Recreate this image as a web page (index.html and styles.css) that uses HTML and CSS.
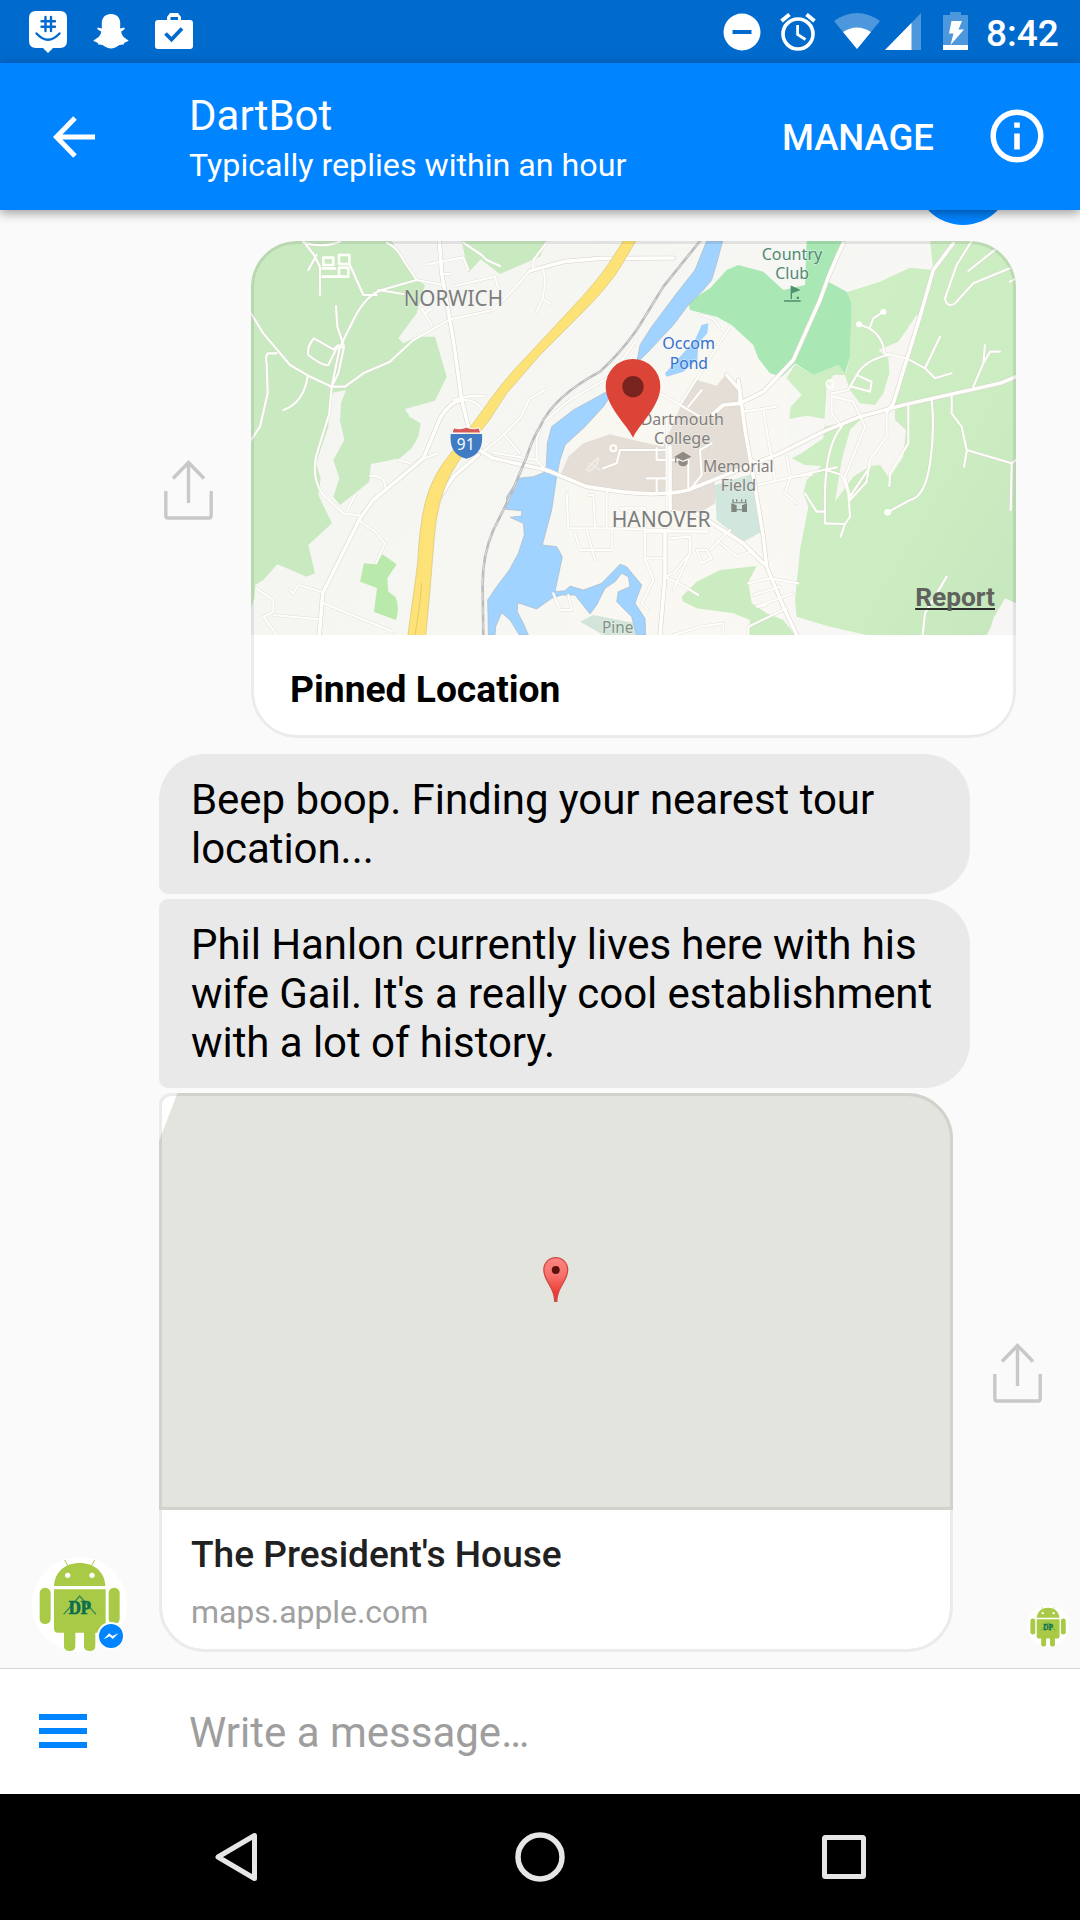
FILE: index.html
```html
<!DOCTYPE html>
<html lang="en">
<head>
<meta charset="utf-8">
<title>DartBot</title>
<link rel="stylesheet" href="styles.css">
</head>
<body>
<svg class="defs" width="0" height="0">
  <defs>
    <symbol id="share" viewBox="0 0 49 60">
      <path d="M1.8 31V55.5Q1.8 58 4.3 58H44.700Q47.200 58 47.200 55.500V31M24.500 43V2.500M9 18.500L24.500 2.500L40 18.500" fill="none" stroke="#c8c8c8" stroke-width="3.400"/>
    </symbol>
    <symbol id="droid" viewBox="97 231 285 285">
      <circle cx="239.500" cy="373.500" r="142.500" fill="#fff"/>
      <g fill="#a9ca46">
        <path d="M163 318C165 275 197 249 240 249S315 275 317 318Z"/>
        <path d="M163 328H318V446Q318 458 306 458H175Q163 458 163 446Z"/>
        <rect x="120" y="323" width="33" height="109" rx="16"/>
        <rect x="327" y="323" width="33" height="109" rx="16"/>
        <path d="M193 450H227V500Q225 513 210 513Q195 513 193 500ZM253 450H287V500Q285 513 270 513Q255 513 253 500Z"/>
        <path d="M195 240L206 260M285 240L274 260" stroke="#a9ca46" stroke-width="3"/>
      </g>
      <circle cx="204" cy="286" r="8" fill="#fff"/>
      <circle cx="277" cy="286" r="8" fill="#fff"/>
      <path d="M192 403L240 348L289 403" fill="none" stroke="#2f8a55" stroke-width="4"/>
      <text class="dp" x="207" y="402" textLength="67" lengthAdjust="spacingAndGlyphs">DP</text>
    </symbol>
  </defs>
</svg>

<div class="phone">
  <div class="status">
    <svg class="s-groupme" viewBox="0 0 38 42"><path d="M7 0H31Q38 0 38 7V30Q38 37 31 37H24L19 42L14 37H7Q0 37 0 30V7Q0 0 7 0Z" fill="#fff"/><path d="M16.500 6V20M22 6V20M12.500 10.300H26M12.500 15.700H26M7.500 22.500Q19 35 30.500 22.500" fill="none" stroke="#006acd" stroke-width="2.400" stroke-linecap="round"/></svg>
    <svg class="s-snap" viewBox="0 0 36 36"><path d="M18 0C24 0 27.500 4 27.500 9.500L27.400 15L31.500 14C33 15 32 16.500 28.500 18C29 23 33 25.500 36 27C35.500 29 31 28.500 31 31.500C25 31 24 35.500 18 35.500S11 31 5 31.500C5 28.500 .5 29 0 27C3 25.500 7.500 23 8 18C4 16.500 3 15 4.500 14L8.600 15L8.500 9.500C8.500 4 12 0 18 0Z" fill="#fff"/></svg>
    <svg class="s-case" viewBox="0 0 38 36"><path d="M12 7V4L15 0H23L26 4V7H35Q38 7 38 10V33Q38 36 35 36H3Q0 36 0 33V10Q0 7 3 7ZM15.500 7H23V4H15.500Z" fill="#fff" fill-rule="evenodd"/><path d="M10.500 20.500L16.500 26.500L27 15.500" fill="none" stroke="#006acd" stroke-width="3.800"/></svg>
    <svg class="s-dnd" viewBox="0 0 38 38"><circle cx="19" cy="19" r="18.500" fill="#fff"/><path d="M9.500 19H28.500" stroke="#006acd" stroke-width="4"/></svg>
    <svg class="s-alarm" viewBox="0 0 36 38"><g fill="none" stroke="#fff"><circle cx="18" cy="21" r="15" stroke-width="3.600"/><path d="M1.500 8L9.500 1.500M34.500 8L26.500 1.500" stroke-width="4"/><path d="M17.600 12V21.500L25.500 26.500" stroke-width="2.800"/></g></svg>
    <svg class="s-wifi" viewBox="0 0 46 36"><path d="M0 8Q23 -8 46 8L23 36Z" fill="#4d97dc"/><path d="M9 19Q23 10 37 19L23 36Z" fill="#fff"/></svg>
    <svg class="s-cell" viewBox="0 0 36 37"><path d="M36 0V37H0Z" fill="#4d97dc"/><path d="M26.500 10V37H0Z" fill="#fff"/></svg>
    <svg class="s-batt" viewBox="0 0 25 38"><path d="M7 0H18V3H25V33H0V3H7Z" fill="#4d97dc"/><path d="M0 33H25V38H0ZM8.500 9H19L15.500 17.500H21L7.500 33L10.500 21.500H6Z" fill="#fff"/></svg>
    <span class="clock">8:42</span>
  </div>

  <header class="bar">
    <svg class="back" viewBox="0 0 42 42"><path d="M42 21H4M22 2L3.500 21L22 40" fill="none" stroke="#fff" stroke-width="5"/></svg>
    <div class="who">
      <div class="name">DartBot</div>
      <div class="sub">Typically replies within an hour</div>
    </div>
    <span class="manage">MANAGE</span>
    <svg class="info" viewBox="0 0 54 54"><circle cx="27" cy="27" r="23.800" fill="none" stroke="#fff" stroke-width="5.500"/><path d="M24.200 13.500H29.800V18.800H24.200ZM24.200 24.500H29.800V40.500H24.200Z" fill="#fff"/></svg>
  </header>

  <main class="chat">
    <div class="dot"></div>

    <div class="row out">
      <svg class="share"><use href="#share"/></svg>
      <article class="card pinned">
        <div class="map">
          <svg class="mapart" viewBox="33 33 2295 1182" preserveAspectRatio="none">
            <defs>
              <linearGradient id="land" x1="0" y1="0" x2="1" y2="0.400"><stop offset="0" stop-color="#f3f4f2"/><stop offset=".3" stop-color="#f5f6f2"/><stop offset="1" stop-color="#f8f7f5"/></linearGradient>
              <linearGradient id="wood" x1="0" y1="0" x2="1" y2="1"><stop offset="0" stop-color="#ceefc3"/><stop offset=".65" stop-color="#ccedc2"/><stop offset="1" stop-color="#c6e7bd"/></linearGradient>
              <g id="minor">
                <path d="M190 33L222 75L240 110V195M330 105L370 195H410M205 120L230 75"/>
                <path d="M33 250L70 310L150 405L205 437L275 470H315L370 430L450 395L520 330L630 268L760 240L810 190L870 122"/>
                <path d="M110 370H85Q75 375 80 400L83 490L60 590L33 630M203 440Q190 520 130 540"/>
                <path d="M288 228L292 290L312 350L295 430L275 470L268 550L228 680Q215 750 250 795L310 850L360 857M312 350L290 355L265 405Q250 410 205 375Q200 350 222 325L280 358L295 345"/>
                <path d="M275 470L300 350L345 260Q380 195 425 180L530 150L610 165M415 180L490 192M440 38Q470 50 490 90L530 150"/>
                <path d="M190 38Q250 55 300 35M670 38L725 75L740 90L780 108M562 103L670 82L685 120M645 168L765 140L775 175M610 132H630M920 38L880 90V120"/>
                <path d="M910 120Q920 150 908 205L890 245M908 205L930 220M545 235L575 285M555 250L575 235"/>
                <path d="M915 480L870 505L840 565L790 615L730 665M790 610L840 670M735 500Q710 490 640 510M660 510Q720 505 735 560"/>
                <path d="M360 875L405 905L435 940L408 1000M250 1120L460 1205M245 1085L175 1065L160 1090L148 1080M50 1075L100 1110V1145L70 1160L110 1215M100 1155L240 1168M320 845L345 795M390 738Q435 735 435 770M540 690L595 670M475 690L510 700"/>
                <path d="M920 725L890 690L760 668M890 690V630L905 580L990 510L1110 440L1190 330"/>
                <path d="M980 790L985 895H1115V960H1020L1005 910M1045 795H1060L1065 890M1040 900L1065 990M1100 780V890M940 1090L960 1140H995L985 1095M1115 895L1400 905M1160 850H1120"/>
                <g transform="translate(1140 0)">
                  <path d="M-50 715L-10 700L0 660H140M140 560V840M110 655V690H140M80 745H140M110 745V785M205 780V690H150M210 780L245 735L240 660L275 640M120 490L180 525L240 560M180 525L330 290M205 530L245 480"/>
                  <path d="M240 255Q290 260 300 300M370 545L470 530M430 540L465 750M415 765L470 752L610 720L650 712M500 680L510 740L575 735M415 730L400 690M510 745L495 790L530 820M555 790L590 845H615"/>
                  <path d="M0 835H75V985L100 1050L65 1120L85 1140M75 905H265M150 925L210 920V970L160 1030L135 1040M80 985H130M210 970L160 1080M230 960H260L275 985L245 1000ZM270 960L330 900M290 930L350 980L390 965L440 1010M135 1040Q180 1060 235 1095M385 1060L450 1045L535 1060M400 1095L480 1070M410 1130L520 1090M415 1130L440 1125M385 1215V1190L500 1135M160 1215L240 1190L310 1180V1215"/>
                  <path d="M790 245L760 265L748 295L715 283M748 295Q790 320 793 370L860 385L915 415L945 445L995 430M915 415L960 320M805 375Q735 390 710 435L685 480L635 490V550L665 590M710 435L755 455L750 485L695 470M640 500L700 515L735 590L675 740L690 800L750 710M635 465H640M665 590Q620 640 615 780V880L675 882L690 860L685 790L665 735L620 720M675 882L662 920M690 810L740 755L750 690L800 620V540M865 525V640L810 730L808 768M935 510Q945 600 930 700T870 810L803 847"/>
                  <path d="M1055 33L1010 105L975 205Q980 235 1005 220L1060 160L1170 115M1130 55L1045 123M1188 145L1170 155M995 500V550L1025 590L1040 660L1175 700L1188 690M1040 665L1032 710M1175 700L1172 840M1060 470L1090 400L1095 345M1090 400L1110 365H1140M980 1040L915 1150L908 1215"/>
                </g>
              </g>
              <g id="major">
                <path d="M598 33L605 130L640 330L665 510L685 590M685 640L760 685L920 720L1040 770L1140 785M870 122L970 95L1080 85L1300 84M715 675L640 740L600 800M238 1215L248 1090L360 865L400 810L550 685L590 590Q610 530 660 510"/>
                <path transform="translate(1140 0)" d="M0 785Q120 800 205 780L380 710L480 670L610 605L720 560L850 525L1140 460L1188 440M670 40Q630 120 600 210L520 390L430 485L360 520L310 525L270 560M355 450L375 600L400 740L430 920L440 1010L490 1130L530 1215M150 650V840M135 900V1040L120 1215M230 850L370 940L430 1000M320 435L360 480V520M1000 40L940 120L900 260L820 520L800 545"/>
              </g>
            </defs>
            <rect x="33" y="33" width="2295" height="1182" fill="url(#land)"/>
            <g fill="#c9eac0">
              <path d="M33 33H455L490 95L530 150L555 165L530 250L475 325L490 340L530 320L585 320L620 440L585 512L495 537L510 562L542 580L535 620L515 655L480 685L393 702L388 755L320 810L300 825L280 800L298 745L280 690L313 630L300 572L303 520L318 480L270 490L265 590L228 700L242 745L235 795L276 880L205 945L225 1030L200 1040L112 1003L70 1050L46 1065L44 1100L33 1135Z"/>
              <path d="M665 33H920L900 80L780 132L722 88L685 128Z"/>
            </g>
            <path fill="#b9eaac" d="M427 973L470 1003L442 1045L445 1085L466 1100Q480 1130 468 1170L402 1146L411 1074L360 1055L372 1000L408 1003Z"/>
            <path fill="#fdf8ee" opacity=".35" d="M990 560L1150 520L1500 240L1640 450L1660 1215H980Z"/>
            <path fill="#e4ded7" d="M957 745L985 680L1030 640L1110 613L1180 630L1270 650L1330 510L1370 450L1430 467L1460 430L1497 475L1512 600L1530 705L1420 742L1430 790L1425 820L1370 855L1295 838L1290 790L1140 785L1040 765Z"/>
            <g transform="translate(1140 0)">
              <path fill="url(#wood)" d="M930 33H1188V1215H1105L1120 1165L1155 1105L1100 1215H740L630 1190L530 1160L525 1110L540 960L565 830L550 790L560 750L605 708L555 705L515 685L545 670L610 625L615 567L560 557L508 567L512 530L545 495L500 445L525 403L580 435L655 405L678 430L690 380L695 220L680 187L780 155L870 113L940 120Z"/>
              <path fill="#f7f6f2" d="M890 255L835 335L775 360L805 385L808 430L790 490L765 525L720 520L690 480L675 435L640 435L620 470L612 590L665 580L730 560L690 600L665 690L645 815L700 740L750 708L780 705L808 745L850 680L858 600L825 570V500L900 265Z"/>
              <path fill="#f7f6f4" d="M1105 1215L1120 1165L1155 1105L1188 1120V1215Z"/>
              <path fill="#a9e8b4" d="M355 105L430 125L490 180L555 165L560 33H665L625 155L680 185L695 220L690 380L675 430L655 405L580 435L525 400L485 440L450 430L415 385L400 345L335 285L290 260L210 240L205 215L270 175L320 120Z"/>
              <path fill="#cbecc0" d="M185 1100L230 1055L300 1020L410 1008L385 1055L395 1120L440 1150L490 1170L525 1215H385L390 1170L340 1150L230 1135L190 1115Z"/>
              <path fill="#d1e6dc" d="M285 765L405 730L425 905L370 935L290 870Z"/>
              <path fill="#a0d3ff" d="M245 285L265 280L262 310L235 340L232 390L190 425L140 440L135 430L180 380L225 330Z"/>
            </g>
            <path fill="#d3e5d9" d="M1020 1175L1060 1155L1185 1180L1190 1215H1090Z"/>
            <path fill="#a0d3ff" stroke="#a9b6c2" stroke-width="2" d="M1400 33L1365 120L1310 190L1235 290L1200 345L1190 400L1180 430L1100 485L1000 540L935 590L922 640L918 725L880 740L835 745L800 800L797 838L845 842V858L810 862L850 880L853 915L835 970L808 1020L770 1070L743 1110L745 1215H765L767 1190L785 1148L810 1170L838 1215H865L850 1180L832 1145L833 1118L890 1137L935 1105L965 1095H1005L1050 1152L1070 1125L1095 1075L1125 1055L1145 1030L1165 1040L1170 1070L1135 1085L1130 1115L1175 1160L1190 1215H1217L1215 1165L1185 1120L1205 1065L1160 1010L1140 1003L1085 1060L1030 1080L990 1068L975 1082L945 1085L967 980L950 950L907 945L935 840L950 740L960 690L975 645L1035 590L1090 530L1110 500L1190 400L1230 360L1300 285L1345 225L1390 180L1415 150L1430 100L1448 33Z"/>
            <g fill="none" stroke-linejoin="round" stroke-linecap="round">
              <use href="#minor" stroke="#d4d1cd" stroke-opacity=".65" stroke-width="9"/>
              <use href="#major" stroke="#d4d1cd" stroke-width="14"/>
              <use href="#minor" stroke="#fffefb" stroke-width="6.500"/>
              <use href="#major" stroke="#fffefb" stroke-width="11"/>
              <path d="M1380 33L1270 170L1190 300Q1140 370 1080 425Q940 500 900 590Q880 620 860 680L810 800L760 900Q725 980 728 1080L730 1215" stroke="#bcbcbc" stroke-width="8"/>
              <path d="M1380 33L1270 170L1190 300Q1140 370 1080 425Q940 500 900 590Q880 620 860 680L810 800L760 900Q725 980 728 1080L730 1215" stroke="#dedede" stroke-width="3" stroke-dasharray="22 22"/>
              <path d="M250 83H280V105H250ZM297 75H328V102H297ZM297 113H325V140H297ZM248 115H285M248 140H325" stroke="#fffefb" stroke-width="8"/>
              <path d="M1040 720Q1080 670 1075 690T1045 725M1050 700L1080 720" stroke="#eeeae5" stroke-width="6"/>
              <circle cx="1120" cy="655" r="9" stroke="#fffefb" stroke-width="6"/>
              <circle cx="1770" cy="462" r="11" stroke="#fffefb" stroke-width="6"/>
            </g>
            <g fill="#fffefb"><circle cx="1930" cy="245" r="9"/><circle cx="1857" cy="283" r="9"/><circle cx="1943" cy="847" r="10"/></g>
            <path fill="#fde277" stroke="#d8c27a" stroke-width="2" d="M1155 25L1110 95Q1075 150 985 245L855 385Q790 450 725 545L640 660Q575 735 555 820Q538 890 533 1000L503 1220H557L570 1080L583 920Q590 820 630 735Q680 650 745 575L800 490L900 375L1020 255Q1110 165 1145 105L1192 25Z"/>
            <path fill="none" stroke="#d8bd62" stroke-width="2" d="M525 1215Q540 1130 545 1060"/>
            <path fill="#3f7cc4" d="M632 612H726C729 650 718 676 679 686C640 676 629 650 632 612Z"/>
            <path fill="#d65a58" stroke="#fff" stroke-width="3" d="M636 609L641 593Q655 600 679 592Q703 600 717 593L722 609Z"/>
            <text class="shield" x="650" y="661" textLength="54">91</text>
            <g class="town"><text x="491" y="227" textLength="298" lengthAdjust="spacingAndGlyphs">NORWICH</text><text x="1115" y="890" textLength="297" lengthAdjust="spacingAndGlyphs">HANOVER</text></g>
            <g class="place">
              <text class="park" x="1565" y="90" textLength="182" lengthAdjust="spacingAndGlyphs">Country</text>
              <text class="park" x="1606" y="148" textLength="101" lengthAdjust="spacingAndGlyphs">Club</text>
              <text class="water" x="1267" y="357" textLength="158" lengthAdjust="spacingAndGlyphs">Occom</text>
              <text class="water" x="1289" y="417" textLength="115" lengthAdjust="spacingAndGlyphs">Pond</text>
              <text x="1202" y="585" textLength="250" lengthAdjust="spacingAndGlyphs">Dartmouth</text>
              <text x="1242" y="642" textLength="169" lengthAdjust="spacingAndGlyphs">College</text>
              <text x="1389" y="727" textLength="212" lengthAdjust="spacingAndGlyphs">Memorial</text>
              <text x="1442" y="783" textLength="106" lengthAdjust="spacingAndGlyphs">Field</text>
              <text class="pine" x="1086" y="1210" textLength="94" lengthAdjust="spacingAndGlyphs">Pine</text>
            </g>
            <path fill="#4d8f6e" d="M1652 167H1656V207H1652ZM1656 168L1682 180L1656 190ZM1632 211H1682V215H1632ZM1670 200H1677V207H1670Z"/>
            <path fill="#8f8a86" d="M1303 680L1329 665L1354 680L1329 692ZM1315 690L1329 697L1343 690V700Q1340 709 1329 709T1315 700ZM1305 683H1309V698H1305Z"/>
            <path fill="#80877f" d="M1474 820L1490 826V838H1506V826L1521 820V846H1506V841H1490V846H1474ZM1477 808H1481V817H1515V808H1519V820H1477ZM1488 808H1492V815H1488ZM1503 808H1507V815H1503Z"/>
            <path fill="#dc4438" d="M1179 623C1162 585 1097 530 1097 469A82 82 0 0 1 1261 469C1261 530 1196 585 1179 623Z"/>
            <circle cx="1179" cy="470" r="32" fill="#78241e"/>
          </svg>
          <span class="report">Report</span>
        </div>
        <h2 class="cap">Pinned Location</h2>
      </article>
    </div>

    <p class="bubble first">Beep boop. Finding your nearest tour<br>location...</p>
    <p class="bubble">Phil Hanlon currently lives here with his<br>wife Gail. It's a really cool establishment<br>with a lot of history.</p>

    <div class="row in">
      <div class="avatar">
        <svg class="droid"><use href="#droid"/></svg>
        <svg class="badge" viewBox="0 0 28 28"><circle cx="14" cy="14" r="14" fill="#fdfdfd"/><circle cx="14" cy="14" r="12" fill="#0084ff"/><path d="M6.500 17.300L12.300 11.200L15.300 14L21.500 11.200L15.800 17L12.800 14.200Z" fill="#fff"/></svg>
      </div>
      <article class="card place-card">
        <div class="blank">
          <svg class="pin" viewBox="0 0 76 136"><defs><linearGradient id="pg" x1="0" y1="0" x2="0" y2="1"><stop offset="0" stop-color="#f98680"/><stop offset=".4" stop-color="#f7726c"/><stop offset=".8" stop-color="#ee3b35"/></linearGradient></defs><path d="M35 134C35 88 2 76 2 38A36 36 0 0 1 74 38C74 76 41 88 41 134Z" fill="url(#pg)" stroke="#cf4943" stroke-width="4"/><circle cx="38" cy="39" r="12" fill="#5a120f"/></svg>
        </div>
        <h2 class="title">The President's House</h2>
        <p class="link">maps.apple.com</p>
      </article>
      <svg class="share"><use href="#share"/></svg>
      <svg class="seen"><use href="#droid"/></svg>
    </div>
  </main>

  <footer class="compose">
    <div class="menu"><i></i><i></i><i></i></div>
    <span class="hint">Write a message…</span>
  </footer>

  <nav class="nav">
    <svg viewBox="0 0 52 52"><path d="M8 26L44.500 4.500V47.500Z" fill="none" stroke="#e6e6e6" stroke-width="5" stroke-linejoin="round"/></svg>
    <svg viewBox="0 0 52 52"><circle cx="26" cy="26" r="22" fill="none" stroke="#e6e6e6" stroke-width="5.500"/></svg>
    <svg viewBox="0 0 52 52"><rect x="6.500" y="6.500" width="39" height="39" rx="1" fill="none" stroke="#e6e6e6" stroke-width="5"/></svg>
  </nav>
</div>
</body>
</html>
```
FILE: styles.css
```css
* { box-sizing: border-box; margin: 0; padding: 0; }
body { font-family: Roboto, "Liberation Sans", sans-serif; background: #fafafa; }
svg { display: block; flex: none; }
.defs { position: absolute; }
.phone { width: 1080px; height: 1920px; display: flex; flex-direction: column; overflow: hidden; }

.status { height: 63px; flex: none; display: flex; align-items: flex-start; background: #006acd; padding-left: 28.5px; color: #fff; }
.s-groupme { width: 38px; height: 42px; margin-top: 10.5px; }
.s-snap { width: 36px; height: 35px; margin: 14px 0 0 26px; }
.s-case { width: 38px; height: 36px; margin: 13px 0 0 26px; }
.s-dnd { width: 38px; height: 38px; margin: 13px 0 0 auto; }
.s-alarm { width: 36px; height: 38px; margin: 13px 0 0 19px; }
.s-wifi { width: 46px; height: 36px; margin: 13px 0 0 18px; }
.s-cell { width: 36px; height: 37px; margin: 13px 0 0 5px; }
.s-batt { width: 25px; height: 38px; margin: 12px 0 0 22px; }
.clock { width: 94px; margin: 12px 0 0 18px; font-size: 37px; line-height: 43px; font-weight: 500; }

.bar { position: relative; z-index: 2; height: 147px; flex: none; display: flex; align-items: center; padding: 0 36px 0 53px; background: #0084ff; color: #fff; box-shadow: 0 3px 10px rgba(0, 0, 0, .38); }
.back { width: 42px; height: 42px; }
.who { flex: 1; margin-left: 94px; padding-top: 1px; }
.name { font-size: 42px; line-height: 49px; }
.sub { margin-top: 6px; font-size: 32.2px; line-height: 38px; white-space: nowrap; }
.manage { margin: 1px 56px 0 0; font-size: 36.5px; font-weight: 500; }
.info { width: 54px; height: 54px; margin-bottom: 2px; }

.chat { flex: 1; min-height: 0; overflow: hidden; background: #fafafa; }
.dot { width: 96px; height: 96px; margin: -81px 0 16px 915px; border-radius: 50%; background: #0084ff; }
.row { display: flex; align-items: center; }
.share { width: 49px; height: 60px; }
.card { position: relative; background: #fff; overflow: hidden; }

.out { padding-left: 164px; gap: 38px; }
.pinned { width: 765px; height: 497px; border-radius: 46px; }
.pinned::after { content: ""; position: absolute; inset: 0; border: 3px solid rgba(0, 0, 0, .08); border-radius: 46px; }
.map { position: relative; height: 394px; }
.mapart { width: 765px; height: 394px; }
.report { position: absolute; right: 21px; bottom: 23px; font-size: 26.3px; line-height: 30px; font-weight: 700; color: #5f625d; text-decoration: underline #2b2d2a 2px; text-underline-offset: 2px; text-decoration-skip-ink: none; }
.cap { margin: 33px 0 0 39px; font-size: 37.2px; line-height: 42px; font-weight: 700; color: #000; }

.town { font: 66px "Noto Sans", sans-serif; fill: #7d7d7d; stroke: rgba(248, 248, 246, .5); stroke-width: 4px; paint-order: stroke; }
.place { font: 51px "Noto Sans", sans-serif; fill: #827e7b; stroke: rgba(248, 248, 246, .5); stroke-width: 4px; paint-order: stroke; }
.park { fill: #4f8a74; }
.water { fill: #3571d0; }
.pine { fill: #7d9186; }
.shield { font: 46px "Noto Sans", sans-serif; fill: #fff; }
.dp { font: bold 54px "Liberation Serif", serif; fill: #0c6e50; stroke: #0c6e50; stroke-width: 2px; }

.bubble { width: 811px; margin: 5px 0 0 159px; padding: 21px 0 21px 32px; border-radius: 9px 46px 46px 9px; background: #e9e9e9; color: #000; font-size: 42px; line-height: 49px; letter-spacing: -.06px; white-space: nowrap; }
.bubble.first { margin-top: 16px; border-top-left-radius: 46px; }

.in { margin-top: 5px; padding-left: 32px; }
.avatar { position: relative; align-self: flex-end; width: 95px; height: 95px; margin-right: 32px; }
.droid { width: 95px; height: 95px; }
.badge { position: absolute; left: 65px; top: 65px; width: 28px; height: 28px; }
.place-card { width: 794px; height: 559px; border: 3px solid #ebebeb; border-radius: 12px 46px 46px 46px; overflow: visible; }
.blank { height: 417px; margin: -3px -3px 0; display: flex; justify-content: center; border: 3px solid #d1d2cc; border-radius: 0 46px 0 0; background: #e3e4de; clip-path: polygon(18.500px 0, 100% 0, 100% 100%, 0 100%, 0 48px); }
.pin { width: 25.500px; height: 45px; margin-top: 161px; }
.title { margin: 24px 0 0 29px; font-size: 37.1px; line-height: 42px; font-weight: 500; color: #212121; }
.link { margin: 17px 0 0 29px; font-size: 32px; line-height: 38px; letter-spacing: -.05px; color: #a0a0a0; }
.in .share { margin: 0 0 0 40px; }
.seen { width: 42px; height: 42px; align-self: flex-end; margin: 0 0 5px -15px; }

.compose { height: 126px; flex: none; display: flex; align-items: center; padding-left: 39px; border-top: 1px solid #d6d6d6; background: #fff; }
.menu { display: flex; flex-direction: column; gap: 8px; width: 48px; margin-bottom: 2px; }
.menu i { height: 6px; background: #0084ff; }
.hint { margin: 1px 0 0 102px; font-size: 42px; line-height: 49px; color: #9e9e9e; }

.nav { height: 126px; flex: none; display: flex; align-items: center; justify-content: center; gap: 252px; background: #000; }
.nav svg { width: 52px; height: 52px; }
```
